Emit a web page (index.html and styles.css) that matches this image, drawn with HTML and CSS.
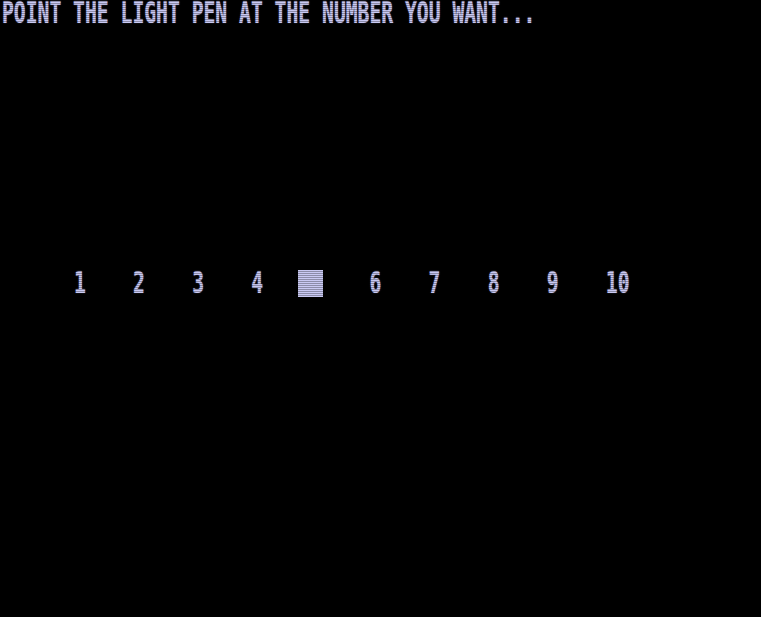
FILE: index.html
```html
<!DOCTYPE html>
<html>
<head>
<meta charset="utf-8">
<link rel="stylesheet" href="styles.css">
</head>
<body>
<div class="screen">
  <div class="prompt"><span class="txt">POINT THE LIGHT PEN AT THE NUMBER YOU WANT...</span></div>
  <div class="choices">
    <div class="cell"><span class="txt">1</span></div>
    <div class="cell"><span class="txt">2</span></div>
    <div class="cell"><span class="txt">3</span></div>
    <div class="cell"><span class="txt">4</span></div>
    <div class="cell"><span class="target"></span></div>
    <div class="cell"><span class="txt">6</span></div>
    <div class="cell"><span class="txt">7</span></div>
    <div class="cell"><span class="txt">8</span></div>
    <div class="cell"><span class="txt">9</span></div>
    <div class="cell"><span class="txt">10</span></div>
  </div>
</div>
<div class="scanlines"></div>
</body>
</html>
```
FILE: styles.css
```css
html, body {
  margin: 0;
  padding: 0;
  background: #000;
  height: 100%;
  overflow: hidden;
}
.screen {
  width: 761px;
  height: 617px;
  background: #000;
  color: #c9c9f3;
  font-family: "DejaVu Sans Mono", "Liberation Mono", monospace;
  font-weight: bold;
  font-size: 19.7px;
  line-height: 18px;
}
.prompt {
  height: 27px;
  padding-left: 2px;
  white-space: nowrap;
}
.txt {
  display: inline-block;
  transform: scaleY(1.523);
  transform-origin: left top;
  white-space: nowrap;
  text-shadow: 0 0 1px rgba(200, 200, 255, 0.6);
}
.choices {
  display: flex;
  align-items: flex-start;
  margin-top: 243px;
  padding-left: 74px;
  height: 27px;
}
.cell {
  width: 59.1px;
  flex: none;
  height: 27px;
}
.target {
  display: block;
  width: 25px;
  height: 27px;
  margin-left: -12px;
  background: #c9c9f3;
}
.scanlines {
  position: fixed;
  inset: 0;
  pointer-events: none;
  background: repeating-linear-gradient(to bottom, rgba(0,0,0,0) 0, rgba(0,0,0,0) 1px, rgba(0,0,0,0.3) 1px, rgba(0,0,0,0.3) 2px);
}
```
